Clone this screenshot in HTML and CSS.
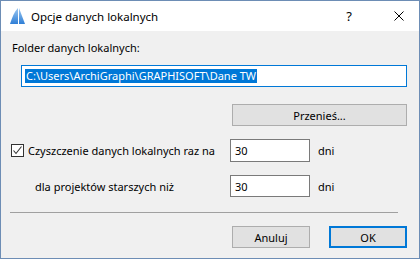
FILE: index.html
```html
<!DOCTYPE html>
<html lang="pl">
<head>
    <meta charset="UTF-8">
    <title>Opcje danych lokalnych</title>
    <link rel="stylesheet" href="styles.css">
</head>
<body>
    <div class="window">
        <div class="titlebar">
            <svg class="app-icon" width="15" height="16" viewBox="0 0 15 16">
                <defs>
                    <linearGradient id="fin" x1="0" y1="0" x2="0" y2="1">
                        <stop offset="0" stop-color="#9cc8f2"/>
                        <stop offset="1" stop-color="#2f7fd6"/>
                    </linearGradient>
                </defs>
                <path d="M0 16 C2 10 4 4 8 0 L8 16 Z" fill="url(#fin)"/>
                <path d="M9 0 L15 16 L9 16 Z" fill="url(#fin)"/>
            </svg>
            <span class="title">Opcje danych lokalnych</span>
            <span class="help">?</span>
            <span class="close">
                <svg width="10" height="10" viewBox="0 0 10 10">
                    <path d="M0.5 0.5 L9.5 9.5 M9.5 0.5 L0.5 9.5" stroke="#000" stroke-width="1"/>
                </svg>
            </span>
        </div>

        <div class="content">
            <div class="label">Folder danych lokalnych:</div>
            <div class="path-field">
                <span class="selected">C:\Users\ArchiGraphi\GRAPHISOFT\Dane TW</span>
            </div>

            <div class="move-row">
                <button class="btn move-btn">Przenieś...</button>
            </div>

            <div class="opt-row">
                <label class="check-label">
                    <span class="checkbox">
                        <svg width="11" height="11" viewBox="0 0 11 11">
                            <path d="M1.5 5.5 L4 8.5 L9.5 1.5" fill="none" stroke="#333" stroke-width="1.1"/>
                        </svg>
                    </span>
                    Czyszczenie danych lokalnych raz na
                </label>
                <div class="num-field">30</div>
                <span class="unit">dni</span>
            </div>

            <div class="opt-row second">
                <span class="sub-label">dla projektów starszych niż</span>
                <div class="num-field">30</div>
                <span class="unit">dni</span>
            </div>

            <div class="separator"></div>

            <div class="actions">
                <button class="btn">Anuluj</button>
                <button class="btn btn-default">OK</button>
            </div>
        </div>
    </div>
</body>
</html>
```

FILE: styles.css
```css
* {
    box-sizing: border-box;
}

body, html {
    margin: 0;
    padding: 0;
    font-family: 'Noto Sans', 'Open Sans', sans-serif;
    font-size: 11px;
    color: #000;
    background: #f0f0f0;
}

.window {
    width: 420px;
    height: 259px;
    border: 1px solid #6d8db5;
    background: #f0f0f0;
    display: flex;
    flex-direction: column;
    white-space: nowrap;
}

/* barra de título */
.titlebar {
    height: 30px;
    background: #ffffff;
    display: flex;
    align-items: center;
    padding-left: 9px;
}

.app-icon {
    margin-right: 6px;
}

.title {
    flex: 1;
    font-size: 11.5px;
    color: #000;
}

.help {
    width: 20px;
    margin-right: 35px;
    text-align: center;
    font-size: 13px;
}

.close {
    width: 10px;
    height: 10px;
    display: flex;
    margin-right: 15px;
}

.content {
    flex: 1;
    padding: 9px 12px 0 11px;
}

.label {
    height: 16px;
    line-height: 16px;
}

.path-field {
    margin: 9px 0 0 9px;
    height: 22px;
    border: 1px solid #0078d7;
    background: #ffffff;
    padding: 2px 3px;
    display: flex;
    align-items: center;
    overflow: hidden;
}

.selected {
    background: #0078d7;
    color: #ffffff;
    line-height: 14px;
    padding: 0 1px;
}

.move-row {
    display: flex;
    justify-content: flex-end;
    margin-top: 17px;
}

.btn {
    font-family: inherit;
    font-size: 11px;
    color: #000;
    background: #e1e1e1;
    border: 1px solid #adadad;
    height: 22px;
    width: 78px;
    padding: 0;
}

.move-btn {
    width: 175px;
}

.opt-row {
    display: grid;
    grid-template-columns: 210px 80px auto;
    column-gap: 8px;
    align-items: center;
    margin-top: 13px;
    height: 23px;
}

.opt-row.second {
    margin-top: 13px;
    height: 22px;
}

.check-label {
    display: flex;
    align-items: center;
    margin-left: -1px;
}

.checkbox {
    width: 13px;
    height: 13px;
    border: 1px solid #333;
    background: #ffffff;
    margin-right: 4px;
    display: flex;
    align-items: center;
    justify-content: center;
}

.sub-label {
    padding-left: 23px;
}

.num-field {
    height: 100%;
    border: 1px solid #7a7a7a;
    background: #ffffff;
    padding-left: 4px;
    display: flex;
    align-items: center;
}

.separator {
    height: 1px;
    background: #a0a0a0;
    margin: 15px 9px 0 -2px;
}

.actions {
    display: flex;
    justify-content: flex-end;
    gap: 19px;
    margin-top: 13px;
}

.btn-default {
    border: 2px solid #0078d7;
}
```
